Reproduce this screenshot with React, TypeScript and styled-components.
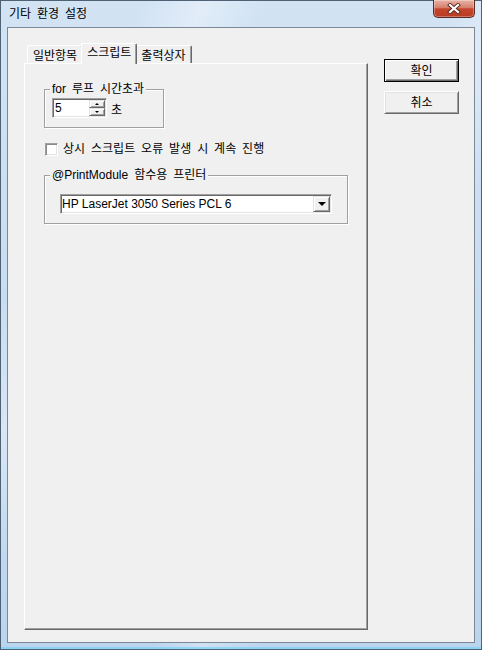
import React from "react";
import styled, { createGlobalStyle } from "styled-components";

const GlobalStyle = createGlobalStyle`
  html, body {
    margin: 0;
    padding: 0;
    background: #ffffff;
  }
  body {
    font-family: "Liberation Sans", "Noto Sans CJK KR", sans-serif;
    font-size: 12px;
    word-spacing: 2.6px;
    color: #000000;
  }
  * {
    box-sizing: border-box;
  }
`;

const Window = styled.div`
  width: 482px;
  height: 650px;
  display: flex;
  flex-direction: column;
  padding: 0 6px 6px 6px;
  border: 1px solid #4f6275;
  background:
    linear-gradient(115deg, transparent 18%, rgba(255, 255, 255, 0.35) 26%, transparent 34%, transparent 58%, rgba(255, 255, 255, 0.3) 64%, transparent 72%),
    linear-gradient(180deg, #d2e3f4 0%, #c8dcf1 50%, #bcd5ee 100%);
  box-shadow: inset 0 -2px 0 rgba(120, 210, 245, 0.7);
`;

const TitleBar = styled.div`
  height: 26px;
  display: flex;
  justify-content: space-between;
  align-items: flex-start;
`;

const Title = styled.span`
  margin-left: 2px;
  padding-top: 6px;
  line-height: 14px;
  font-size: 12px;
`;

const CloseButton = styled.div`
  width: 42px;
  height: 18px;
  margin-top: -1px;
  display: flex;
  align-items: center;
  justify-content: center;
  border: 1px solid #5c2b25;
  border-top: none;
  border-radius: 0 0 5px 5px;
  background: linear-gradient(180deg, #e9b3a7 0%, #d6806c 45%, #c3462d 52%, #b93b22 100%);
  box-shadow: inset 0 0 0 1px rgba(255, 255, 255, 0.3);
`;

const Client = styled.div`
  flex: 1;
  display: flex;
  border: 1px solid #7b8895;
  background: #f0f0f0;
  padding: 15px 0 0 16px;
`;

const LeftColumn = styled.div`
  width: 344px;
  display: flex;
  flex-direction: column;
  margin-bottom: 12px;
`;

const TabStrip = styled.div`
  height: 20px;
  display: flex;
  align-items: flex-end;
  padding-left: 3px;
`;

const Tab = styled.div<{ $active?: boolean }>`
  position: relative;
  z-index: ${(p) => (p.$active ? 1 : 0)};
  height: ${(p) => (p.$active ? 21 : 18)}px;
  margin: 0 ${(p) => (p.$active ? -2 : 0)}px ${(p) => (p.$active ? -1 : 0)}px;
  padding: ${(p) => (p.$active ? 2 : 3)}px 5px 0;
  line-height: 14px;
  background: #f0f0f0;
  border: 1px solid;
  border-color: #ffffff #696969 transparent #ffffff;
  border-bottom: none;
  border-radius: 2px 2px 0 0;
  box-shadow: inset -1px 0 0 #a0a0a0;
  white-space: nowrap;
`;

const Panel = styled.div`
  flex: 1;
  display: flex;
  flex-direction: column;
  align-items: flex-start;
  border: 1px solid;
  border-color: #ffffff #696969 #696969 #ffffff;
  box-shadow: inset -1px -1px 0 #a0a0a0;
  padding: 19px 0 0 19px;
`;

const GroupBox = styled.fieldset<{ $width: number; $pad: string }>`
  margin: 0;
  width: ${(p) => p.$width}px;
  padding: ${(p) => p.$pad};
  border: 1px solid #a0a0a0;
  box-shadow: inset 1px 1px 0 #ffffff, 1px 1px 0 #ffffff;
  min-inline-size: 0;
`;

const Legend = styled.legend<{ $shift: number }>`
  padding: 0 2px;
  margin-left: ${(p) => p.$shift}px;
  line-height: 13px;
  font-size: 12px;
  background: #f0f0f0;
  white-space: nowrap;
`;

const SpinRow = styled.div`
  display: flex;
  align-items: center;
  gap: 4px;
`;

const SunkenField = styled.div<{ $width: number }>`
  width: ${(p) => p.$width}px;
  height: 20px;
  display: flex;
  padding: 1px;
  background: #ffffff;
  border: 1px solid;
  border-color: #a0a0a0 #ffffff #ffffff #a0a0a0;
  box-shadow: inset 1px 1px 0 #696969, inset -1px -1px 0 #e3e3e3;
`;

const FieldText = styled.span<{ $indent: number }>`
  flex: 1;
  min-width: 0;
  padding-left: ${(p) => p.$indent}px;
  line-height: 16px;
  word-spacing: 0;
  white-space: nowrap;
  overflow: hidden;
`;

const SpinButtons = styled.div`
  width: 16px;
  flex: none;
  display: flex;
  flex-direction: column;
`;

const RaisedButton = styled.div<{ $width?: number }>`
  flex: ${(p) => (p.$width ? `0 0 ${p.$width}px` : "1")};
  display: flex;
  align-items: center;
  justify-content: center;
  background: #f0f0f0;
  border: 1px solid;
  border-color: #e3e3e3 #696969 #696969 #e3e3e3;
  box-shadow: inset 1px 1px 0 #ffffff, inset -1px -1px 0 #a0a0a0;
`;

const Arrow = styled.span<{ $dir: "up" | "down"; $size: number }>`
  width: 0;
  height: 0;
  border-left: ${(p) => p.$size}px solid transparent;
  border-right: ${(p) => p.$size}px solid transparent;
  ${(p) =>
    p.$dir === "up"
      ? `border-bottom: ${p.$size}px solid #000;`
      : `border-top: ${p.$size}px solid #000;`}
`;

const CheckRow = styled.div`
  margin-top: 14px;
  margin-left: 1px;
  display: flex;
  align-items: center;
  gap: 5px;
  line-height: 14px;
`;

const CheckBox = styled.span`
  width: 13px;
  height: 13px;
  background: #ffffff;
  border: 1px solid;
  border-color: #a0a0a0 #ffffff #ffffff #a0a0a0;
  box-shadow: inset 1px 1px 0 #8a8a8a, inset -1px -1px 0 #e3e3e3;
`;

const PrinterGroup = styled(GroupBox)`
  margin-top: 13px;
`;

const RightColumn = styled.div`
  margin-left: 16px;
  padding-top: 16px;
  display: flex;
  flex-direction: column;
  gap: 9px;
`;

const DialogButton = styled.div<{ $default?: boolean }>`
  width: 75px;
  height: 23px;
  display: flex;
  align-items: center;
  justify-content: center;
  line-height: 14px;
  background: #f0f0f0;
  border: 1px solid;
  border-color: ${(p) => (p.$default ? "#000000" : "#ffffff #696969 #696969 #ffffff")};
  box-shadow: ${(p) =>
    p.$default
      ? "inset 1px 1px 0 #ffffff, inset -1px -1px 0 #696969, inset -2px -2px 0 #a0a0a0"
      : "inset 1px 1px 0 #e3e3e3, inset -1px -1px 0 #a0a0a0"};
`;

const App: React.FC = () => {
  return (
    <>
      <GlobalStyle />
      <Window>
        <TitleBar>
          <Title>기타 환경 설정</Title>
          <CloseButton>
            <svg width="14" height="11" viewBox="0 0 14 11">
              <path d="M3 2 L11 9 M11 2 L3 9" stroke="#5a2a22" strokeWidth="4" strokeLinecap="square" />
              <path d="M3 2 L11 9 M11 2 L3 9" stroke="#ffffff" strokeWidth="2.2" strokeLinecap="square" />
            </svg>
          </CloseButton>
        </TitleBar>
        <Client>
          <LeftColumn>
            <TabStrip>
              <Tab>일반항목</Tab>
              <Tab $active>스크립트</Tab>
              <Tab>출력상자</Tab>
            </TabStrip>
            <Panel>
              <GroupBox $width={120} $pad="2px 0 9px 7px">
                <Legend $shift={-2}>for 루프 시간초과</Legend>
                <SpinRow>
                  <SunkenField $width={55}>
                    <FieldText $indent={1}>5</FieldText>
                    <SpinButtons>
                      <RaisedButton>
                        <Arrow $dir="up" $size={2} />
                      </RaisedButton>
                      <RaisedButton>
                        <Arrow $dir="down" $size={2} />
                      </RaisedButton>
                    </SpinButtons>
                  </SunkenField>
                  <span>초</span>
                </SpinRow>
              </GroupBox>

              <CheckRow>
                <CheckBox />
                <span>상시 스크립트 오류 발생 시 계속 진행</span>
              </CheckRow>

              <PrinterGroup $width={304} $pad="12px 0 9px 15px">
                <Legend $shift={-10}>@PrintModule 함수용 프린터</Legend>
                <SunkenField $width={272}>
                  <FieldText $indent={0}>HP LaserJet 3050 Series PCL 6</FieldText>
                  <RaisedButton $width={17}>
                    <Arrow $dir="down" $size={4} />
                  </RaisedButton>
                </SunkenField>
              </PrinterGroup>
            </Panel>
          </LeftColumn>
          <RightColumn>
            <DialogButton $default>확인</DialogButton>
            <DialogButton>취소</DialogButton>
          </RightColumn>
        </Client>
      </Window>
    </>
  );
};

export default App;
